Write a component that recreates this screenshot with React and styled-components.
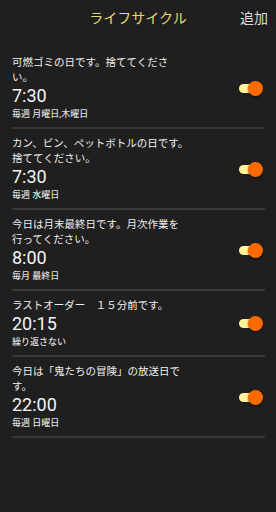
import React from "react";
import styled, { createGlobalStyle } from "styled-components";

const GlobalStyle = createGlobalStyle`
  html, body {
    margin: 0;
    padding: 0;
    background: #1f1f1f;
  }
  body {
    font-family: Roboto, "Noto Sans CJK JP", sans-serif;
  }
`;

const Page = styled.div`
  width: 276px;
  height: 512px;
  background: #1f1f1f;
  overflow: hidden;
`;

const Header = styled.div`
  height: 34px;
  display: flex;
  align-items: center;
  justify-content: center;
  position: relative;
  margin-bottom: 14px;
`;

const Title = styled.div`
  color: #e8da6e;
  font-size: 14px;
`;

const AddButton = styled.div`
  position: absolute;
  right: 8px;
  top: 0;
  height: 34px;
  display: flex;
  align-items: center;
  color: #dcdcdc;
  font-size: 14px;
  cursor: pointer;
`;

const List = styled.div`
  padding: 0 11px 0 12px;
`;

const Row = styled.div`
  display: flex;
  align-items: center;
  padding: 7px 2px 6px 0;
  border-bottom: 2px solid #383838;
`;

const Info = styled.div`
  flex: 1;
  display: flex;
  flex-direction: column;
`;

const Message = styled.div`
  color: #f0f0f0;
  font-size: 10.5px;
  line-height: 15px;
  white-space: pre-line;
`;

const Time = styled.div`
  color: #f4f4f4;
  font-size: 18px;
  line-height: 22px;
`;

const Repeat = styled.div`
  color: #dedede;
  font-size: 9px;
  line-height: 14px;
  font-weight: 500;
`;

const Toggle = styled.div`
  position: relative;
  width: 24px;
  height: 15px;
  flex-shrink: 0;
`;

const Track = styled.div`
  position: absolute;
  left: 0;
  top: 3px;
  width: 18px;
  height: 9px;
  border-radius: 5px;
  background: ${(p) => (p.$on ? "#fff39c" : "#777")};
`;

const Thumb = styled.div`
  position: absolute;
  top: 0;
  left: ${(p) => (p.$on ? "9px" : "0")};
  width: 15px;
  height: 15px;
  border-radius: 50%;
  background: ${(p) => (p.$on ? "#ff6a00" : "#ccc")};
  box-shadow: 0 1px 2px rgba(0, 0, 0, 0.6);
`;

const alarms = [
  {
    message: "可燃ゴミの日です。捨ててくださ\nい。",
    time: "7:30",
    repeat: "毎週 月曜日,木曜日",
  },
  {
    message: "カン、ビン、ペットボトルの日です。\n捨ててください。",
    time: "7:30",
    repeat: "毎週 水曜日",
  },
  {
    message: "今日は月末最終日です。月次作業を\n行ってください。",
    time: "8:00",
    repeat: "毎月 最終日",
  },
  {
    message: "ラストオーダー　１５分前です。",
    time: "20:15",
    repeat: "繰り返さない",
  },
  {
    message: "今日は「鬼たちの冒険」の放送日で\nす。",
    time: "22:00",
    repeat: "毎週 日曜日",
  },
];

function Switch({ on }) {
  return (
    <Toggle>
      <Track $on={on} />
      <Thumb $on={on} />
    </Toggle>
  );
}

export default function App() {
  return (
    <Page>
      <GlobalStyle />
      <Header>
        <Title>ライフサイクル</Title>
        <AddButton>追加</AddButton>
      </Header>
      <List>
        {alarms.map((a, i) => (
          <Row key={i}>
            <Info>
              <Message>{a.message}</Message>
              <Time>{a.time}</Time>
              <Repeat>{a.repeat}</Repeat>
            </Info>
            <Switch on />
          </Row>
        ))}
      </List>
    </Page>
  );
}
